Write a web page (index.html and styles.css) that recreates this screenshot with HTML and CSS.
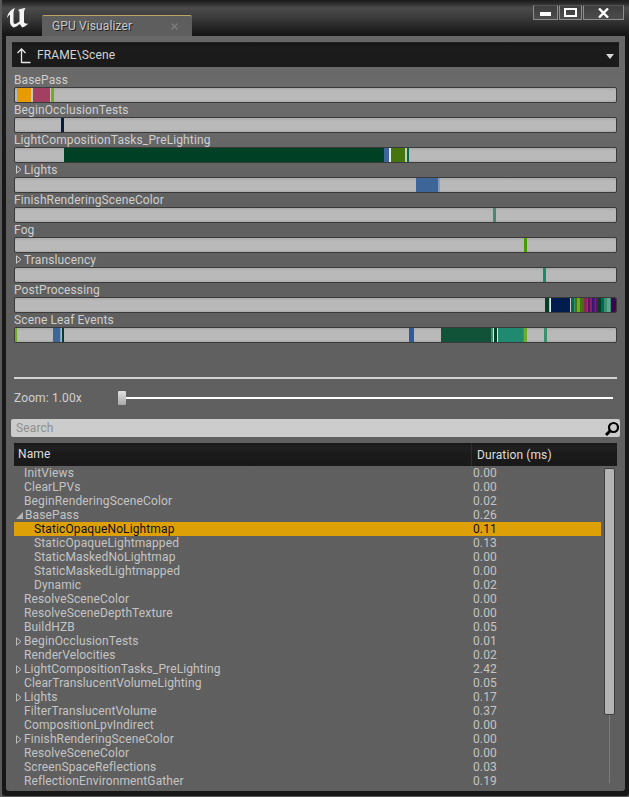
FILE: index.html
```html
<!DOCTYPE html>
<html>
<head>
    <meta charset="UTF-8">
    <title>GPU Visualizer</title>
    <link rel="stylesheet" href="styles.css">
</head>
<body>
<div class="window">
    <div class="titlebar">
        <svg class="logo" width="24" height="22" viewBox="0 0 24 22">
            <path fill="#f4f4f4" d="M1 11 C1.500 7 4 3 9 1 C7.800 3 7.500 5 7.500 7 L7.500 15 C7.500 17 9 17.500 10.500 16.500 L13.500 14.500 L13.500 6 C13.500 4.500 13 3.500 12 3 C14 2 17 1.200 19.500 1 C18.500 2.500 18 4 18 6 L18 15 C18.500 16.500 20 17 22.500 16.500 C20.500 18.500 18.500 19.800 16.500 20.500 C15.500 19.500 14.500 18.500 14 17 C12 18.500 9.500 20 7.500 20.500 C5.500 19.500 4 17.500 4 15 L4 8 C4 7 2.500 8.500 1 11 Z"/>
        </svg>
        <div class="tab">
            <span class="tab-title">GPU Visualizer</span>
            <svg class="tab-close" width="7" height="7" viewBox="0 0 7 7"><path d="M0.500 0.500 L6.500 6.500 M6.500 0.500 L0.500 6.500" stroke="#7e7e7e" stroke-width="1.200"/></svg>
        </div>
        <div class="winbtns">
            <div class="winbtn btn-min"><span class="min-glyph"></span></div>
            <div class="winbtn btn-max"><span class="max-glyph"></span></div>
            <div class="winbtn btn-close">
                <svg width="11" height="10" viewBox="0 0 11 10"><path d="M1 0.500 L10 9.500 M10 0.500 L1 9.500" stroke="#fff" stroke-width="2.400"/></svg>
            </div>
        </div>
    </div>

    <div class="panel">
        <div class="crumb">
            <svg class="crumb-up" width="15" height="16" viewBox="0 0 15 16"><path d="M5.500 15 L5.500 2 M1.500 5 L5.500 1 L9.500 5 M5.500 14.500 L14.500 14.500" fill="none" stroke="#e8e8e8" stroke-width="1.300"/></svg>
            <span class="crumb-text">FRAME\Scene</span>
            <span class="crumb-arrow"></span>
        </div>

        <div class="tracks">
            <div class="track">
                <div class="track-label">BasePass</div>
                <div class="bar">
                    <span class="seg gap" style="width:2px"></span><span class="seg orange" style="width:14px"></span><span class="seg pale" style="width:2px"></span><span class="seg pink" style="width:17px"></span><span class="seg pale" style="width:1px"></span><span class="seg lime" style="width:3px"></span>
                </div>
            </div>
            <div class="track">
                <div class="track-label">BeginOcclusionTests</div>
                <div class="bar">
                    <span class="seg gap" style="width:46px"></span><span class="seg navy" style="width:3px"></span>
                </div>
            </div>
            <div class="track">
                <div class="track-label">LightCompositionTasks_PreLighting</div>
                <div class="bar">
                    <span class="seg gap" style="width:49px"></span><span class="seg forest" style="width:320px"></span><span class="seg blue" style="width:5px"></span><span class="seg white" style="width:2px"></span><span class="seg olive" style="width:14px"></span><span class="seg pale" style="width:2px"></span><span class="seg teal" style="width:2px"></span>
                </div>
            </div>
            <div class="track">
                <div class="track-label"><svg class="exp" width="6" height="9" viewBox="0 0 6 9"><path d="M0.500 0.800 L5 4.500 L0.500 8.200 Z" fill="none" stroke="#ccc"/></svg>Lights</div>
                <div class="bar">
                    <span class="seg gap" style="width:401px"></span><span class="seg blue" style="width:22px"></span><span class="seg steel" style="width:2px"></span>
                </div>
            </div>
            <div class="track">
                <div class="track-label">FinishRenderingSceneColor</div>
                <div class="bar">
                    <span class="seg gap" style="width:478px"></span><span class="seg sea" style="width:3px"></span>
                </div>
            </div>
            <div class="track">
                <div class="track-label">Fog</div>
                <div class="bar">
                    <span class="seg gap" style="width:509px"></span><span class="seg green" style="width:3px"></span>
                </div>
            </div>
            <div class="track">
                <div class="track-label"><svg class="exp" width="6" height="9" viewBox="0 0 6 9"><path d="M0.500 0.800 L5 4.500 L0.500 8.200 Z" fill="none" stroke="#ccc"/></svg>Translucency</div>
                <div class="bar">
                    <span class="seg gap" style="width:528px"></span><span class="seg mint" style="width:3px"></span>
                </div>
            </div>
            <div class="track">
                <div class="track-label">PostProcessing</div>
                <div class="bar">
                    <span class="seg gap" style="width:530px"></span><span class="seg forest" style="width:4px"></span><span class="seg gap" style="width:1px"></span><span class="seg white" style="width:1px"></span><span class="seg navy" style="width:19px"></span><span class="seg pale" style="width:1px"></span><span class="seg teal" style="width:3px"></span><span class="seg sea" style="width:1px"></span><span class="seg olive" style="width:2px"></span><span class="seg lime" style="width:3px"></span><span class="seg olive" style="width:3px"></span><span class="seg slate" style="width:1px"></span><span class="seg wine" style="width:3px"></span><span class="seg slate" style="width:1px"></span><span class="seg plum" style="width:2px"></span><span class="seg wine" style="width:2px"></span><span class="seg violet" style="width:1px"></span><span class="seg plum" style="width:2px"></span><span class="seg teal" style="width:1px"></span><span class="seg plum" style="width:2px"></span><span class="seg forest" style="width:3px"></span><span class="seg teal" style="width:3px"></span><span class="seg sea" style="width:3px"></span><span class="seg seafoam" style="width:3px"></span><span class="seg sea" style="width:1px"></span><span class="seg purple" style="width:5px"></span>
                </div>
            </div>
            <div class="track">
                <div class="track-label">Scene Leaf Events</div>
                <div class="bar">
                    <span class="seg lime" style="width:2px"></span><span class="seg gap" style="width:36px"></span><span class="seg blue" style="width:7px"></span><span class="seg steel" style="width:1px"></span><span class="seg gap" style="width:1px"></span><span class="seg forest" style="width:2px"></span><span class="seg gap" style="width:345px"></span><span class="seg cobalt" style="width:5px"></span><span class="seg gap" style="width:27px"></span><span class="seg pine" style="width:50px"></span><span class="seg sea" style="width:2px"></span><span class="seg white" style="width:1px"></span><span class="seg forest" style="width:3px"></span><span class="seg white" style="width:1px"></span><span class="seg jade" style="width:25px"></span><span class="seg sea" style="width:1px"></span><span class="seg lime" style="width:3px"></span><span class="seg gap" style="width:17px"></span><span class="seg sea" style="width:3px"></span>
                </div>
            </div>
        </div>

        <div class="separator"></div>

        <div class="zoom-row">
            <span class="zoom-label">Zoom: 1.00x</span>
            <div class="slider">
                <span class="slider-thumb"></span>
                <span class="slider-track"></span>
            </div>
        </div>

        <div class="search">
            <span class="search-hint">Search</span>
            <svg class="search-icon" width="16" height="16" viewBox="0 0 16 16"><circle cx="9.500" cy="6.500" r="4.500" fill="none" stroke="#000" stroke-width="2.200"/><path d="M6 10 L2 14" stroke="#000" stroke-width="3"/></svg>
        </div>

        <div class="tree-head">
            <div class="col-name">Name</div>
            <div class="col-dur">Duration (ms)</div>
        </div>

        <div class="tree">
            <div class="rows">
                <div class="row"><span class="name">InitViews</span><span class="dur">0.00</span></div>
                <div class="row"><span class="name">ClearLPVs</span><span class="dur">0.00</span></div>
                <div class="row"><span class="name">BeginRenderingSceneColor</span><span class="dur">0.02</span></div>
                <div class="row"><span class="name"><svg class="exp-row" width="7" height="7" viewBox="0 0 7 7"><path d="M7 0 L7 7 L0 7 Z" fill="#b4b4b4"/></svg>BasePass</span><span class="dur">0.26</span></div>
                <div class="row sel"><span class="name sub">StaticOpaqueNoLightmap</span><span class="dur">0.11</span></div>
                <div class="row"><span class="name sub">StaticOpaqueLightmapped</span><span class="dur">0.13</span></div>
                <div class="row"><span class="name sub">StaticMaskedNoLightmap</span><span class="dur">0.00</span></div>
                <div class="row"><span class="name sub">StaticMaskedLightmapped</span><span class="dur">0.00</span></div>
                <div class="row"><span class="name sub">Dynamic</span><span class="dur">0.02</span></div>
                <div class="row"><span class="name">ResolveSceneColor</span><span class="dur">0.00</span></div>
                <div class="row"><span class="name">ResolveSceneDepthTexture</span><span class="dur">0.00</span></div>
                <div class="row"><span class="name">BuildHZB</span><span class="dur">0.05</span></div>
                <div class="row"><span class="name"><svg class="exp-row" width="6" height="9" viewBox="0 0 6 9"><path d="M0.500 0.800 L5 4.500 L0.500 8.200 Z" fill="none" stroke="#bbb"/></svg>BeginOcclusionTests</span><span class="dur">0.01</span></div>
                <div class="row"><span class="name">RenderVelocities</span><span class="dur">0.02</span></div>
                <div class="row"><span class="name"><svg class="exp-row" width="6" height="9" viewBox="0 0 6 9"><path d="M0.500 0.800 L5 4.500 L0.500 8.200 Z" fill="none" stroke="#bbb"/></svg>LightCompositionTasks_PreLighting</span><span class="dur">2.42</span></div>
                <div class="row"><span class="name">ClearTranslucentVolumeLighting</span><span class="dur">0.05</span></div>
                <div class="row"><span class="name"><svg class="exp-row" width="6" height="9" viewBox="0 0 6 9"><path d="M0.500 0.800 L5 4.500 L0.500 8.200 Z" fill="none" stroke="#bbb"/></svg>Lights</span><span class="dur">0.17</span></div>
                <div class="row"><span class="name">FilterTranslucentVolume</span><span class="dur">0.37</span></div>
                <div class="row"><span class="name">CompositionLpvIndirect</span><span class="dur">0.00</span></div>
                <div class="row"><span class="name"><svg class="exp-row" width="6" height="9" viewBox="0 0 6 9"><path d="M0.500 0.800 L5 4.500 L0.500 8.200 Z" fill="none" stroke="#bbb"/></svg>FinishRenderingSceneColor</span><span class="dur">0.00</span></div>
                <div class="row"><span class="name">ResolveSceneColor</span><span class="dur">0.00</span></div>
                <div class="row"><span class="name">ScreenSpaceReflections</span><span class="dur">0.03</span></div>
                <div class="row"><span class="name">ReflectionEnvironmentGather</span><span class="dur">0.19</span></div>
            </div>
            <div class="scrollbar">
                <div class="scroll-thumb"></div>
                <div class="scroll-line"></div>
            </div>
        </div>
    </div>
</div>
</body>
</html>
```

FILE: styles.css
```css
html, body {
    margin: 0;
    padding: 0;
    background: #5a5a5a;
}

body {
    width: 629px;
    height: 797px;
    overflow: hidden;
    font-family: Roboto, "Liberation Sans", sans-serif;
    font-size: 12px;
    letter-spacing: 0.12px;
    color: #cfcfcf;
}

/* outer window frame */
.window {
    box-sizing: border-box;
    width: 627px;
    height: 796px;
    margin-left: 2px;
    padding: 0 4px 5px 4px;
    background: #171717;
    display: flex;
    flex-direction: column;
    border-radius: 3px;
}

.titlebar {
    height: 36px;
    flex: none;
    margin: 0 -4px;
    padding: 0 4px;
    display: flex;
    background: linear-gradient(#1d1d1d 0, #232323 2px, #4b4b4b 8px, #3a3a3a 18px, #171717 34px);
}

.logo {
    flex: none;
    margin: 7px 0 0 0;
}

.tab {
    box-sizing: border-box;
    width: 150px;
    height: 21px;
    margin: 15px 0 0 12px;
    padding: 0 8px 0 10px;
    display: flex;
    align-items: center;
    justify-content: space-between;
    background: #5e5e5e;
    border-top: 1px solid #b9a564;
    border-radius: 2px 2px 0 0;
}

.tab-title {
    color: #c8c8c8;
    font-size: 12px;
    text-shadow: 1px 1px 0 #222;
}

.tab-close {
    margin-right: 6px;
}

.winbtns {
    display: flex;
    gap: 1px;
    margin: 5px 1px 0 auto;
    height: 15px;
}

.winbtn {
    box-sizing: border-box;
    height: 15px;
    display: flex;
    align-items: center;
    justify-content: center;
    background: linear-gradient(#3e3e3e, #4c4c4c);
    border: 1px solid #8d8d8d;
    border-top-color: #555;
}

.btn-min { width: 25px; }
.btn-max { width: 23px; }
.btn-close { width: 41px; }

.min-glyph {
    width: 11px;
    height: 4px;
    margin-top: 3px;
    background: #fff;
}

.max-glyph {
    box-sizing: border-box;
    width: 13px;
    height: 9px;
    border: 2px solid #fff;
}

/* main content */
.panel {
    flex: 1;
    min-height: 0;
    padding: 6px 6px 0 6px;
    display: flex;
    flex-direction: column;
    align-items: flex-start;
    background: linear-gradient(#676767 0, #6b6b6b 60px, #606060 170px, #5f5f5f 100%);
    border-radius: 0 0 3px 3px;
}

.crumb {
    box-sizing: border-box;
    width: 607px;
    height: 25px;
    flex: none;
    display: flex;
    align-items: center;
    background: linear-gradient(#151515, #1c1c1c 4px, #1a1a1a);
    border-top: 1px solid #222;
}

.crumb-up {
    flex: none;
    margin: 2px 0 0 4px;
}

.crumb-text {
    margin-left: 6px;
    font-size: 12px;
    color: #d4d4d4;
}

.crumb-arrow {
    margin: 2px 5px 0 auto;
    border-left: 4px solid transparent;
    border-right: 4px solid transparent;
    border-top: 5px solid #d8d8d8;
}

.tracks {
    margin: 5px 0 0 2px;
    flex: none;
}

.track {
    height: 30px;
}

.track-label {
    height: 15px;
    line-height: 14px;
    white-space: nowrap;
    display: flex;
    align-items: center;
}

.exp {
    margin: 0 2px 0 2px;
    flex: none;
}

.bar {
    box-sizing: border-box;
    width: 603px;
    height: 16px;
    display: flex;
    background: linear-gradient(#aaa, #b9b9b9 3px, #b9b9b9 12px, #a9a9a9);
    border: 1px solid #3a3a3a;
    border-radius: 2px;
    overflow: hidden;
}

.seg {
    flex: none;
    height: 100%;
}

.gap { background: transparent; }
.orange { background: #e89b00; }
.pale { background: #cdc7b8; }
.pink { background: #a33f63; }
.lime { background: #6cac27; }
.navy { background: #021c4d; }
.forest { background: #004125; }
.blue { background: #3d6598; }
.steel { background: #7f9dc2; }
.cobalt { background: #2c5c9c; }
.white { background: #e6e6e6; }
.olive { background: #44750f; }
.teal { background: #00694f; }
.sea { background: #3d8f72; }
.seafoam { background: #5fa894; }
.green { background: #459d00; }
.mint { background: #1c8a68; }
.pine { background: #115339; }
.jade { background: #1f8a70; }
.wine { background: #8a2358; }
.slate { background: #33607a; }
.plum { background: #5d116a; }
.violet { background: #2c1a7a; }
.purple { background: #3c0452; }

.separator {
    flex: none;
    width: 603px;
    height: 2px;
    margin: 35px 0 0 2px;
    background: #d4d4d4;
}

.zoom-row {
    flex: none;
    width: 599px;
    height: 14px;
    margin: 12px 0 0 2px;
    display: flex;
    align-items: center;
}

.zoom-label {
    flex: none;
    width: 104px;
}

.slider {
    flex: 1;
    display: flex;
    align-items: center;
}

.slider-thumb {
    flex: none;
    width: 8px;
    height: 14px;
    background: linear-gradient(#e2e2e2, #a8a8a8);
    border-radius: 1px;
}

.slider-track {
    flex: 1;
    height: 2px;
    background: #fff;
}

.search {
    box-sizing: border-box;
    flex: none;
    width: 609px;
    height: 18px;
    margin: 14px 0 0 -1px;
    padding: 0 0 0 5px;
    display: flex;
    align-items: center;
    justify-content: space-between;
    background: #cccccc;
    border-radius: 2px;
}

.search-hint {
    color: #8e8e8e;
}

.search-icon {
    margin-top: 2px;
}

.tree-head {
    box-sizing: border-box;
    flex: none;
    width: 603px;
    height: 23px;
    margin: 6px 0 0 2px;
    display: flex;
    align-items: center;
    background: linear-gradient(#161616, #212121 4px, #1a1a1a 12px, #191919);
}

.col-name {
    box-sizing: border-box;
    width: 458px;
    height: 100%;
    padding-left: 4px;
    line-height: 23px;
    color: #dedede;
    border-right: 1px solid #2e2e2e;
}

.col-dur {
    padding-left: 5px;
    color: #dedede;
}

.tree {
    flex: none;
    margin-left: 2px;
    display: flex;
}

.rows {
    width: 587px;
}

.row {
    height: 14px;
    line-height: 14px;
    display: flex;
    color: #c4c4c4;
}

.row.sel {
    background: #dda007;
    color: #0f0f0f;
}

.name {
    box-sizing: border-box;
    width: 459px;
    padding-left: 10px;
    display: flex;
    align-items: center;
    white-space: nowrap;
}

.name.sub {
    padding-left: 20px;
}

.exp-row {
    flex: none;
    margin: 0 2px 0 -8px;
}

.scrollbar {
    width: 11px;
    margin: 2px 0 0 3px;
    display: flex;
    flex-direction: column;
    align-items: center;
}

.scroll-thumb {
    box-sizing: border-box;
    width: 11px;
    height: 247px;
    flex: none;
    background: #b4b4b4;
    border: 1px solid #3c3c3c;
    border-radius: 2px;
}

.scroll-line {
    width: 1px;
    height: 68px;
    flex: none;
    background: #7c7c7c;
}
```
